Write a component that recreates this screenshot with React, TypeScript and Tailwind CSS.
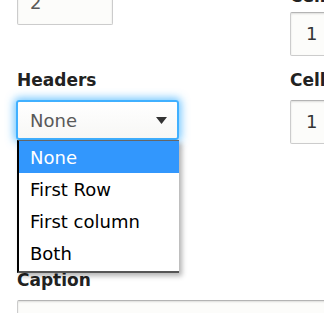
import React from 'react';

const inputCls =
  'h-[44px] rounded-[2px] border border-[#ccc] border-t-[#b4b4b4] bg-[#fcfcfa] shadow-[inset_0_1px_2px_rgba(0,0,0,0.125)] flex items-center text-[18px] leading-none';

export default function App() {
  const options = ['None', 'First Row', 'First column', 'Both'];

  return (
    <div className="relative h-[313px] w-[324px] overflow-hidden bg-white font-['DejaVu_Sans',sans-serif] text-[#222]">
      <div className="flex pl-[17px] gap-[111px]">
        {/* left column */}
        <div className="w-[162px] shrink-0">
          <div className={`${inputCls} -mt-[19px] w-[96px] pl-[12px] text-[#595959]`}>2</div>
          <label className="mt-[45px] mb-[10px] block text-[17px] font-bold leading-[20px] text-[#222]">Headers</label>
          <div className="relative">
            <div className="-ml-px flex h-[40px] w-[163px] items-center justify-between rounded-[3px] border-2 border-[#40b0ff] bg-gradient-to-b from-white to-[#f7f7f5] pl-[12px] pr-[10px] text-[18px] text-[#595959] shadow-[0_0_8px_2px_rgba(51,173,255,0.7)]">
              <span>None</span>
              <svg width="11" height="7" viewBox="0 0 11 7">
                <path d="M0 0h11L5.5 7z" fill="#333" />
              </svg>
            </div>
            {/* open dropdown list */}
            <ul className="absolute left-0 top-[40px] z-10 w-[162px] border-l-2 border-t border-b-2 border-l-black border-t-[#666] border-b-[#555] bg-white pb-[2px] shadow-[3px_3px_5px_rgba(0,0,0,0.3)]">
              {options.map((o, i) => (
                <li
                  key={o}
                  className={`flex h-[32px] items-center pl-[11px] text-[18px] ${i === 0 ? 'bg-[#3297fd] text-white' : 'text-black'}`}
                >
                  {o}
                </li>
              ))}
            </ul>
          </div>
        </div>

        {/* right column */}
        <div className="-mt-[14px] shrink-0">
          <label className="mb-[6px] block text-[17px] font-bold leading-[20px] text-[#222]">Cell spacing</label>
          <div className={`${inputCls} w-[200px] pl-[15px] text-[#333]`}>1</div>
          <label className="mt-[14px] mb-[10px] block text-[17px] font-bold leading-[20px] text-[#222]">Cell padding</label>
          <div className={`${inputCls} w-[200px] pl-[15px] text-[#333]`}>1</div>
        </div>
      </div>

      <div className="pl-[17px]">
        <label className="mt-[126px] mb-[10px] block text-[17px] font-bold leading-[20px] text-[#222]">Caption</label>
        <div className={`${inputCls} w-[400px]`} />
      </div>
    </div>
  );
}
